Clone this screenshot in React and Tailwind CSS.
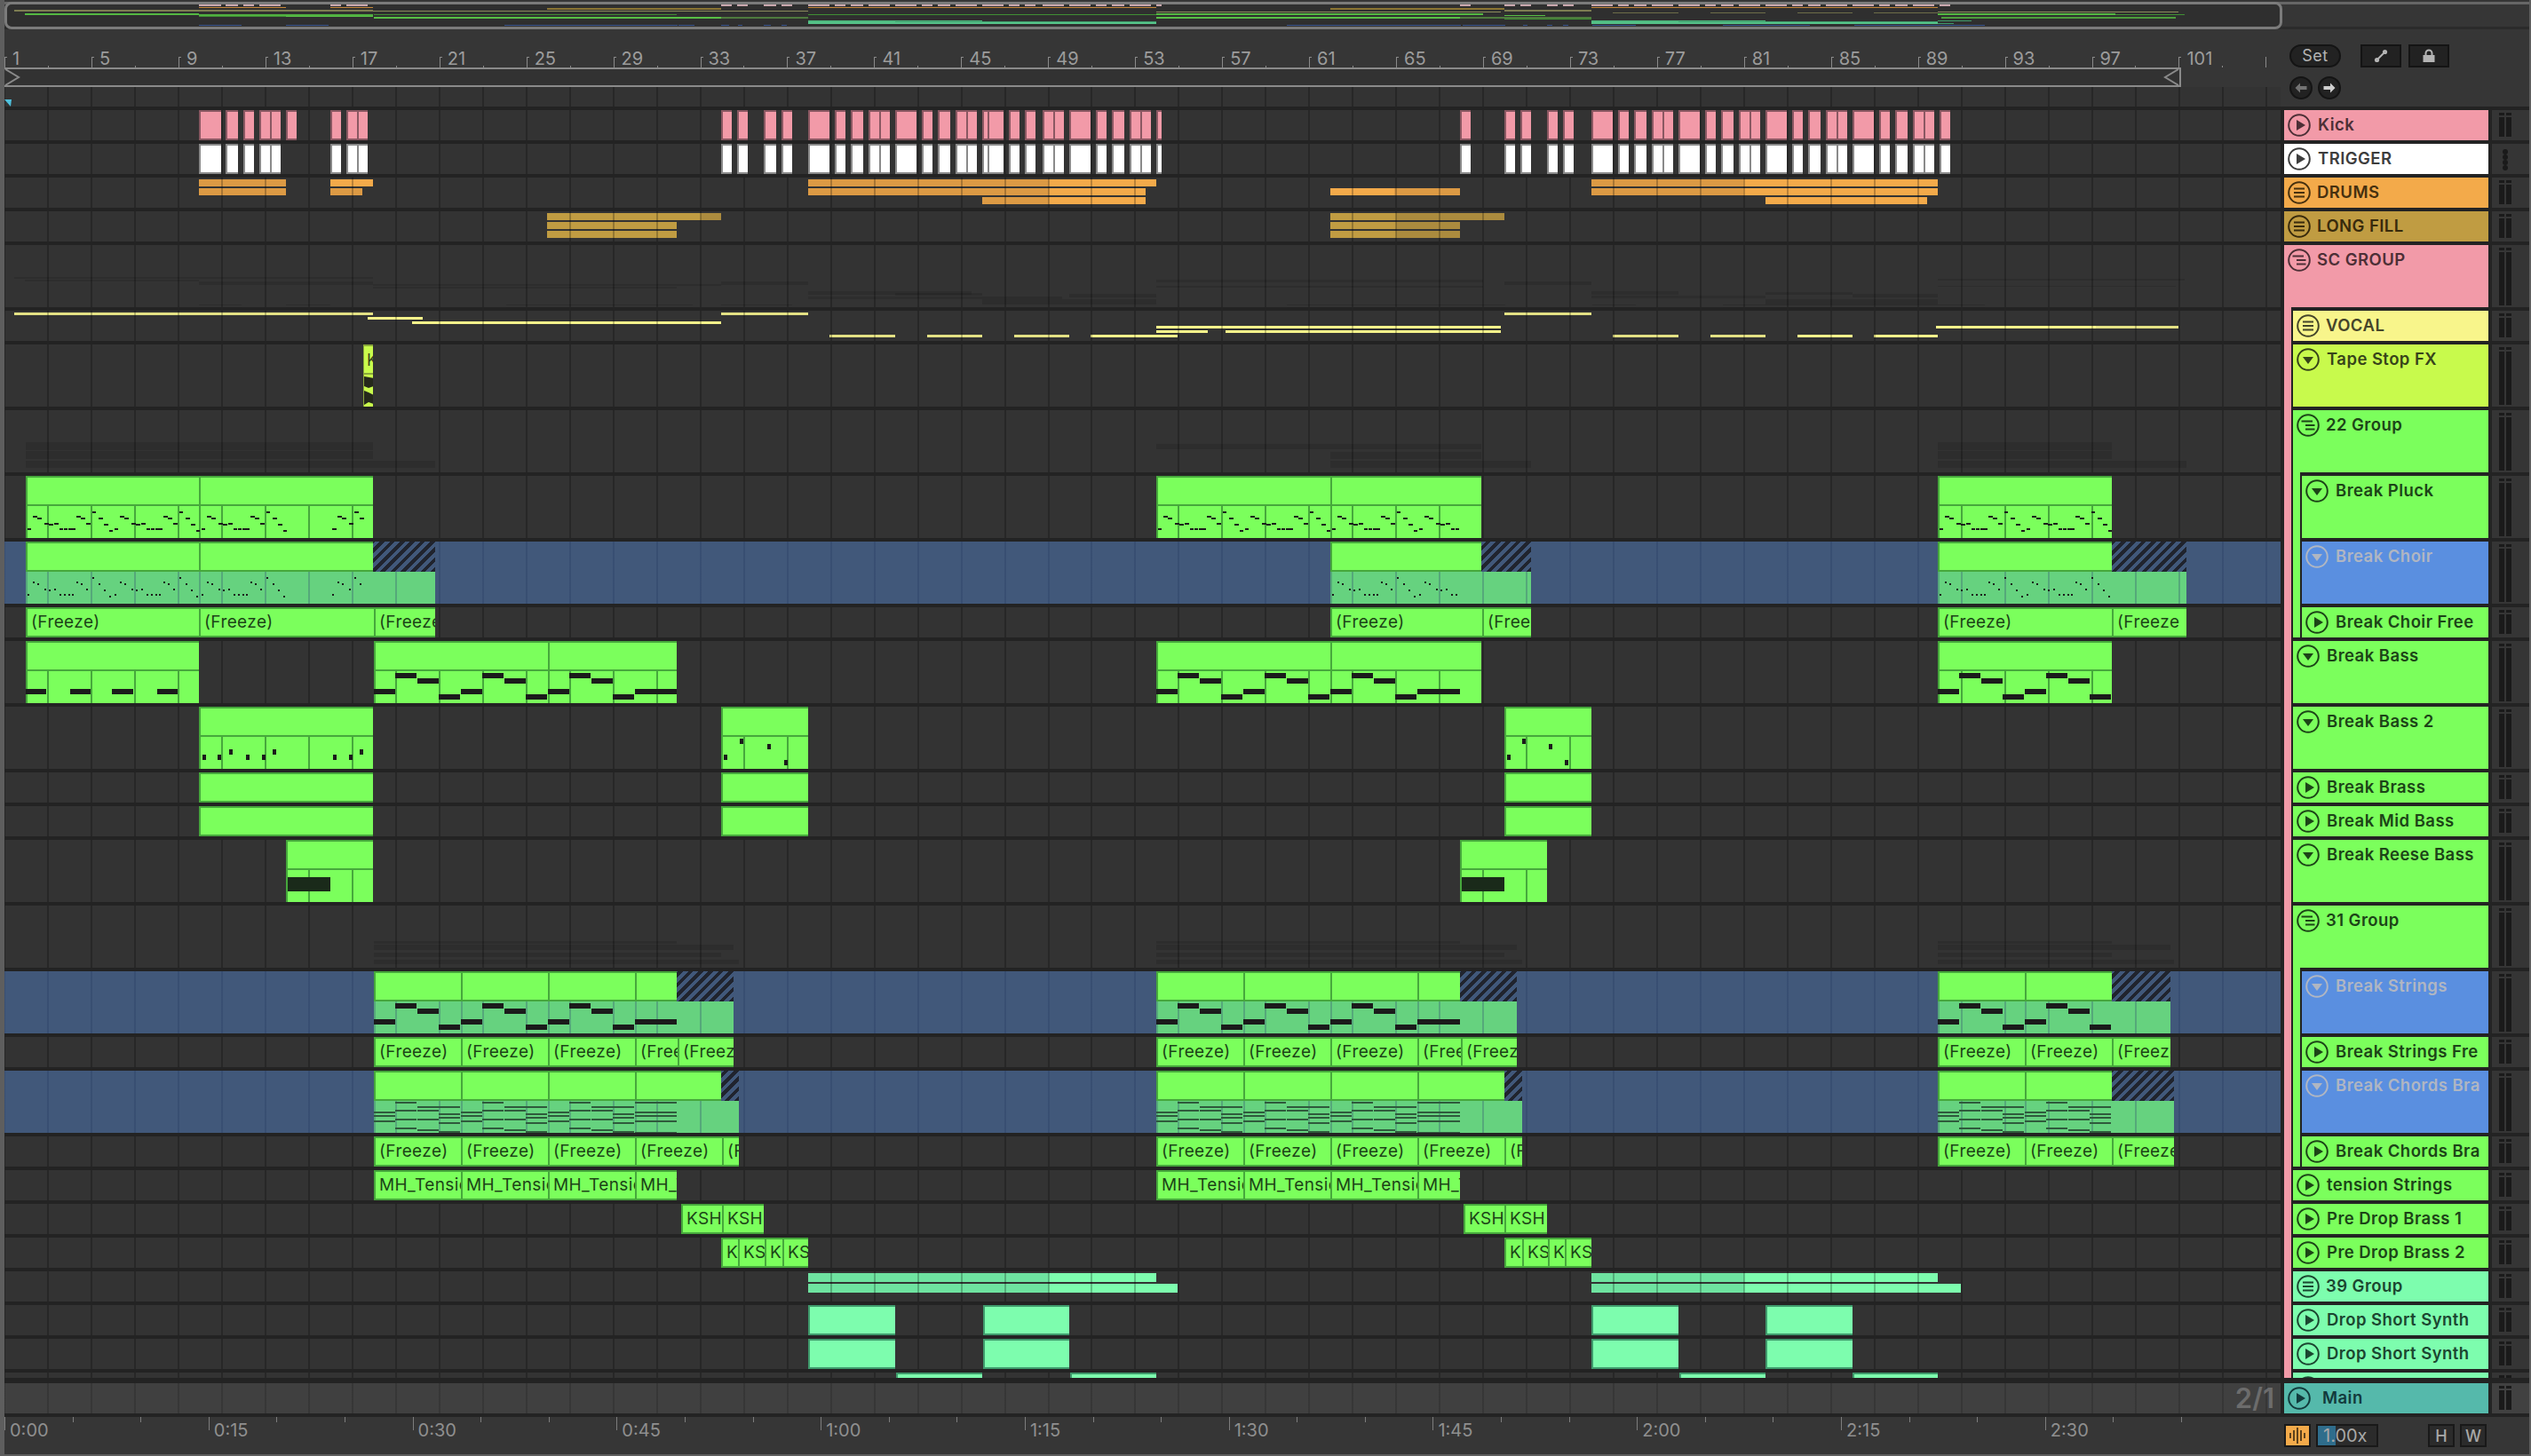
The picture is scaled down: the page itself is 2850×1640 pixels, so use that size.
import React from "react";

// lane coordinates are page px, the arrangement starts at x=5
const BAR_ORANGE = "bg-[#f3aa4a]";
const DIM_ORANGE = "bg-[#dc9a44]";
const BAR_GOLD = "bg-[#c09c42]";
const DIM_GOLD = "bg-[#ab8b3e]";
const BAR_YELLOW = "bg-[#f8f58b]";
const DIM_YELLOW = "bg-[#e3e184]";
const BAR_MINT = "bg-[#7dfdae]";
const DIM_MINT = "bg-[#6ee3a0]";
const GHOST = "bg-black/10";

const hitPattern = (x) => [[x, x + 24], [x + 30, x + 42], [x + 48, x + 62], [x + 68, x + 80], [x + 80, x + 92]];

const TRIGGER_HITS = [
  [224, 249], [254, 268], [274, 286], [292, 304], [304, 316], [372, 384], [390, 402], [402, 414],
  [812, 824], [830, 842], [860, 874], [880, 892],
  ...hitPattern(910), ...hitPattern(1008),
  [1106, 1112], [1112, 1130], [1136, 1148], [1154, 1166], [1174, 1186], [1186, 1198],
  ...hitPattern(1204), [1302, 1308],
  [1644, 1656], [1694, 1706], [1712, 1724], [1742, 1754], [1760, 1772],
  ...hitPattern(1792), ...hitPattern(1890), ...hitPattern(1988), ...hitPattern(2086), [2184, 2196],
];
const KICK_HITS = [...TRIGGER_HITS, [322, 334]];

const PHRASE = [
  [2, 59, 4], [8, 45, 5], [13, 47, 5], [21, 53, 5], [26, 54, 5], [32, 53, 5], [38, 59, 4], [43, 59, 4], [48, 59, 4], [52, 59, 4],
  [57, 45, 5], [62, 47, 5], [68, 53, 5], [75, 40, 4], [82, 47, 5], [88, 54, 5], [94, 61, 4],
];
const phrases = (...starts) => starts.flatMap((s) => PHRASE.map(([x, y, w]) => ({ x: x + s, y, w, h: 2 })));
const dots = (notes) => notes.map((n) => ({ ...n, w: 2 }));

const PLUCK_A = [
  ...phrases(0, 98, 196),
  ...[[345, 59], [351, 45], [356, 47], [364, 53], [370, 40], [376, 47]].map(([x, y]) => ({ x, y, w: 5, h: 2 })),
];
const PLUCK_B = [...phrases(0, 98, 196), ...phrases(294).filter((n) => n.x < 341)];

const BASS_PERIOD = [[0, 54], [24, 36], [49, 42], [73, 60]];
const bass = (periods, long) => {
  const notes = [];
  for (let p = 0; p < periods; p++) {
    BASS_PERIOD.forEach(([x, y]) => notes.push({ x: x + p * 98, y, w: 24, h: 6 }));
  }
  if (long) notes.push({ x: periods * 98, y: 54, w: long, h: 6 });
  return notes;
};

const CHORD_PERIOD = [
  [0, [46, 50, 56]],
  [24, [35, 44, 54, 64]],
  [49, [40, 44, 54, 66]],
  [73, [40, 48, 52, 58, 68]],
];
const chords = (periods, tail) => {
  const notes = [];
  for (let p = 0; p < periods; p++) {
    CHORD_PERIOD.forEach(([x, ys]) => ys.forEach((y) => notes.push({ x: x + p * 98, y, w: 24, h: 2, tone: "bg-[#2f5a3c]" })));
  }
  if (tail) [35, 46, 50, 56, 69].forEach((y) => notes.push({ x: periods * 98, y, w: tail, h: 2, tone: "bg-[#2f5a3c]" }));
  return notes;
};

const stabs = (x0, list) => list.map(([x, y]) => ({ x: x - x0, y, w: 4, h: 6 }));

const OVERVIEW = [
  ...TRIGGER_HITS.map(([a, b]) => [a, b, 5, 2, "bg-[#c9a7ad]"]),
  ...[[224, 322], [372, 420], [910, 1302], [1792, 2182]].map(([a, b]) => [a, b, 8, 1, "bg-[#c5873a]"]),
  [616, 812, 9, 2, "bg-[#8a7433]"], [1498, 1694, 9, 2, "bg-[#8a7433]"],
  [16, 420, 11, 2, "bg-[#7d7d52]"], [420, 812, 12, 1, "bg-[#8a8a5c]"], [812, 910, 12, 1, "bg-[#8a8a5c]"], [1694, 1792, 11, 2, "bg-[#7d7d52]"],
  [1302, 1690, 13, 1, "bg-[#8a8a5c]"], [1816, 1890, 14, 1, "bg-[#6d6d48]"], [1926, 1988, 14, 1, "bg-[#6d6d48]"], [2024, 2086, 14, 1, "bg-[#6d6d48]"], [2110, 2182, 14, 1, "bg-[#6d6d48]"], [2182, 2453, 13, 1, "bg-[#8a8a5c]"],
  [28, 224, 15, 2, "bg-[#54b842]"], [224, 420, 16, 2, "bg-[#50b040]"], [224, 322, 18, 1, "bg-[#3f8f34]"], [322, 420, 18, 1, "bg-[#58c046]"],
  [421, 812, 19, 2, "bg-[#58c046]"], [421, 762, 16, 1, "bg-[#3f8f34]"], [812, 910, 19, 2, "bg-[#4e7a3e]"], [910, 1302, 16, 1, "bg-[#3f8f34]"],
  [1302, 1670, 15, 2, "bg-[#54b842]"], [1302, 1645, 19, 2, "bg-[#58c046]"], [1644, 1792, 19, 2, "bg-[#4e7a3e]"], [1694, 1740, 17, 1, "bg-[#58c046]"], [1694, 1792, 21, 1, "bg-[#3f8f34]"],
  [2182, 2382, 15, 2, "bg-[#54b842]"], [2382, 2460, 16, 1, "bg-[#3f8f34]"], [2186, 2450, 19, 2, "bg-[#4d9d3c]"],
  [910, 1106, 23, 2, "bg-[#4fb880]"], [1008, 1302, 24, 1, "bg-[#3f9a6c]"], [910, 1302, 25, 2, "bg-[#56c48a]"],
  [1792, 1988, 23, 2, "bg-[#4fb880]"], [1890, 2182, 24, 1, "bg-[#3f9a6c]"], [1792, 2182, 25, 2, "bg-[#56c48a]"], [2182, 2220, 23, 1, "bg-[#3f9a6c]"], [2182, 2200, 26, 1, "bg-[#3f9a6c]"],
  ...[[224, 272], [322, 370], [568, 763], [764, 782], [812, 821], [831, 836], [860, 868], [880, 886], [1449, 1645], [1647, 1695], [1715, 1720], [1742, 1748], [1760, 1766], [1793, 1842], [1940, 2038], [2088, 2186], [2186, 2235]].map(([a, b]) => [a, b, 28, 1, "bg-[#3a5690]"]),
];

const SC_GHOSTS = [
  [16, 420, 36, 2], [28, 224, 39, 2], [224, 420, 41, 4], [420, 812, 44, 2], [420, 762, 47, 2], [812, 910, 41, 4],
  [910, 1094, 52, 4], [910, 1196, 58, 3], [1008, 1106, 54, 3], [1106, 1302, 61, 6], [1204, 1302, 55, 4],
  [1302, 1670, 39, 3], [1302, 1670, 46, 2], [1694, 1792, 41, 4], [1792, 1890, 52, 4], [1792, 1988, 57, 3],
  [1988, 2086, 53, 3], [2086, 2182, 55, 4], [1988, 2182, 61, 6], [2182, 2460, 38, 2], [2182, 2450, 46, 1],
  [224, 272, 67, 1], [322, 372, 67, 1], [570, 780, 67, 1], [812, 892, 67, 1], [1449, 1695, 67, 1], [1793, 1842, 67, 1], [1940, 2235, 67, 1],
];
const PLUCK_GHOSTS = [
  [29, 420, 36, 9], [29, 420, 46, 9], [29, 490, 57, 8],
  [1302, 1668, 38, 6], [1498, 1668, 47, 8], [1498, 1724, 57, 8],
  [2182, 2378, 36, 9], [2182, 2378, 46, 9], [2182, 2462, 57, 8],
];
const STRINGS_GHOSTS = [
  [421, 762, 40, 3], [421, 826, 44, 6], [421, 812, 53, 5], [421, 832, 61, 5],
  [1302, 1644, 40, 3], [1302, 1708, 44, 6], [1302, 1694, 53, 5], [1302, 1714, 61, 5],
  [2182, 2378, 40, 3], [2182, 2444, 44, 6], [2182, 2378, 53, 5], [2182, 2448, 61, 5],
];

const Bar = ({ x, end, top, h, className }) => (
  <div className={`absolute ${className}`} style={{ left: x - 5, width: end - x, top, height: h }} />
);

const Ghosts = ({ list }) => list.map(([x, end, top, h], i) => <Bar key={i} x={x} end={end} top={top} h={h} className={GHOST} />);

const Lane = ({ tall, blue, children }) => (
  <div className={`relative w-full shrink-0 overflow-hidden ${tall ? "h-[70px]" : "h-[34px]"} ${blue ? "bg-[#41587a]" : "bg-[#333333]"}`}>
    {children}
    <div
      className={`absolute inset-y-0 -left-px z-[1] w-[2570px] ${
        blue
          ? "bg-[repeating-linear-gradient(90deg,rgba(30,50,90,.25)_0,rgba(30,50,90,.25)_2px,transparent_2px,transparent_48.98px)]"
          : "bg-[repeating-linear-gradient(90deg,rgba(0,0,0,.24)_0,rgba(0,0,0,.24)_2px,transparent_2px,transparent_48.98px)]"
      }`}
    />
  </div>
);

const MidiClip = ({ cuts, end, frozen, notes = [] }) => {
  const x = cuts[0];
  const last = cuts[cuts.length - 1];
  const right = end || last;
  return (
    <div className="absolute inset-y-0 z-[2] overflow-hidden" style={{ left: x - 5, width: right - x }}>
      <div className="flex h-[34px]">
        {cuts.slice(0, -1).map((c, i) => (
          <div key={c} className="h-full shrink-0 border-2 border-r-0 border-[#46a83c] bg-[#7bff5c]" style={{ width: cuts[i + 1] - c }} />
        ))}
        {end && (
          <div className="h-full flex-1 bg-[repeating-linear-gradient(-45deg,#20242e_0,#20242e_4px,#41587a_4px,#41587a_8px)]" />
        )}
      </div>
      <div className={`relative h-[36px] overflow-hidden border-l-2 ${frozen ? "border-[#55a87a] bg-[#66d27f]" : "border-[#46a83c] bg-[#7bff5c]"}`}>
        <div
          className={`absolute inset-y-0 w-[2570px] ${
            frozen
              ? "bg-[repeating-linear-gradient(90deg,#55a87a_0,#55a87a_2px,transparent_2px,transparent_48.98px)]"
              : "bg-[repeating-linear-gradient(90deg,#46a83c_0,#46a83c_2px,transparent_2px,transparent_48.98px)]"
          }`}
          style={{ left: -(x - 5) - 3 }}
        />
        {cuts.slice(1, -1).map((c) => (
          <div key={c} className={`absolute inset-y-0 w-[2px] ${frozen ? "bg-[#55a87a]" : "bg-[#46a83c]"}`} style={{ left: c - x - 2 }} />
        ))}
      </div>
      {notes.map((n, i) => (
        <div key={i} className={`absolute ${n.tone || "bg-[#1b1b1b]"}`} style={{ left: n.x, top: n.y, width: n.w, height: n.h }} />
      ))}
    </div>
  );
};

// a run of touching clips on a short lane: sits at its x, the clips follow each other
const NamedClips = ({ cuts, labels = [], mint }) => (
  <div className="absolute inset-y-0 z-[2] flex" style={{ left: cuts[0] - 5 }}>
    {cuts.slice(0, -1).map((c, i) => (
      <div
        key={c}
        className={`h-full shrink-0 overflow-hidden whitespace-nowrap border-2 border-r-0 pl-1 text-[19px] leading-[30px] tracking-[0.4px] text-[#1c4417] ${
          mint ? "border-[#3f9a6c] bg-[#7dfdae]" : "border-[#46a83c] bg-[#7bff5c]"
        }`}
        style={{ width: cuts[i + 1] - c }}
      >
        {labels[i] || labels[0]}
      </div>
    ))}
  </div>
);

const Hits = ({ list, className }) =>
  list.map(([a, b]) => (
    <div key={a} className={`absolute inset-y-0 z-[2] border-y-2 border-l-2 ${className}`} style={{ left: a - 5, width: b - a }} />
  ));

const TapeClip = () => (
  <div className="absolute inset-y-0 left-[404px] z-[2] w-[11px] overflow-hidden border-l border-[#8aa83a] bg-[#c8fa4c]">
    <div className="h-[2px] bg-[#8aa83a]" />
    <div className="h-[30px] pl-[3px] text-[18px] leading-[32px] text-[#39431a]">K</div>
    <div className="h-[2px] bg-[#8aa83a]" />
    <svg width="11" height="36" viewBox="0 0 11 36" className="block">
      <path d="M0 2 L11 4 L11 13 L5 15 L0 13 Z M0 18 L5 20 L11 23 L11 33 L5 31 L0 34 Z" fill="#25291b" />
    </svg>
  </div>
);

// ruler / time strip
const BAR_NUMBERS = Array.from({ length: 26 }, (_, i) => 1 + i * 4);
const TIMES = ["0:00", "0:15", "0:30", "0:45", "1:00", "1:15", "1:30", "1:45", "2:00", "2:15", "2:30"];

const Ruler = () => (
  <div className="flex h-[87px] w-[2563px] shrink-0 flex-col overflow-hidden">
    <div className="mt-[21px] flex h-[22px] shrink-0">
      {BAR_NUMBERS.map((n) => (
        <React.Fragment key={n}>
          <div className="flex w-[48.98px] shrink-0 items-end">
            <div className="h-[12px] w-[3px] shrink-0 border-l border-t border-[#8a8a8a]" />
            <span className="ml-[6px] self-start text-[20px] leading-[24px] text-[#9c9c9c]">{n}</span>
          </div>
          <div className="flex w-[48.98px] shrink-0 items-end">
            <div className="h-[2px] w-px bg-[#8a8a8a]" />
          </div>
        </React.Fragment>
      ))}
      <div className="flex w-[16px] shrink-0 items-end">
        <div className="h-[12px] w-px bg-[#8a8a8a]" />
      </div>
    </div>
    <div className="flex h-[22px] w-[2451px] shrink-0 justify-between border-y-2 border-r-2 border-[#8a8a8a] bg-[#323232]">
      <svg width="20" height="18" viewBox="0 0 20 18">
        <path d="M1 0 L16 9 L1 18" fill="none" stroke="#8a8a8a" strokeWidth="2" />
      </svg>
      <svg width="20" height="18" viewBox="0 0 20 18">
        <path d="M19 0 L4 9 L19 18" fill="none" stroke="#8a8a8a" strokeWidth="2" />
      </svg>
    </div>
    <div className="relative h-[22px] shrink-0 bg-[#333333]">
      <div className="absolute inset-y-0 -left-px w-[2564px] bg-[repeating-linear-gradient(90deg,rgba(0,0,0,.24)_0,rgba(0,0,0,.24)_2px,transparent_2px,transparent_48.98px)]" />
      <div className="absolute bottom-0 left-0 h-0 w-0 border-l-[7px] border-r-[1px] border-t-[8px] border-l-transparent border-r-transparent border-t-[#4fc0dc]" />
    </div>
  </div>
);

const TimeStrip = () => (
  <div className="flex h-[42px] w-[2563px] shrink-0 overflow-hidden">
    {TIMES.map((t) => (
      <React.Fragment key={t}>
        <div className="flex w-[76.6px] shrink-0">
          <div className="h-[15px] w-px shrink-0 bg-[#7d7d7d]" />
          <span className="ml-[5px] mt-[3px] text-[20px] leading-[24px] text-[#8f8f8f]">{t}</span>
        </div>
        <div className="w-[76.6px] shrink-0">
          <div className="h-[6px] w-px bg-[#7d7d7d]" />
        </div>
        <div className="w-[76.6px] shrink-0">
          <div className="h-[6px] w-px bg-[#7d7d7d]" />
        </div>
      </React.Fragment>
    ))}
  </div>
);

// track headers
const SWATCH = {
  pink: "bg-[#f29aa8] text-[#4d2f36]",
  white: "bg-white text-[#3d3d3d]",
  orange: "bg-[#f3aa4a] text-[#46300f]",
  gold: "bg-[#c09c42] text-[#382a0c]",
  yellow: "bg-[#f8f58b] text-[#45452a]",
  lime: "bg-[#c8fa4c] text-[#37441a]",
  green: "bg-[#7bff5c] text-[#1c4417]",
  blue: "bg-[#5a8fe0] text-[#b0b6c2]",
  mint: "bg-[#7dfdae] text-[#1b4630]",
  main: "bg-[#55b9ab] text-[#123a3c]",
};

const TrackIcon = ({ kind }) => (
  <svg width="26" height="26" viewBox="0 0 26 26" className="shrink-0">
    <circle cx="13" cy="13" r="11.8" fill="none" stroke="currentColor" strokeWidth="2" />
    {kind === "play" && <path d="M10 7 L20 13 L10 19 Z" fill="currentColor" />}
    {kind === "fold" && <path d="M7 10 L19 10 L13 18 Z" fill="currentColor" />}
    {kind === "lines" && <path d="M7 8.5 H19 M7 13 H19 M7 17.5 H19" stroke="currentColor" strokeWidth="2" />}
    {kind === "open" && <path d="M5.5 8.5 H18 M10 13 H20.5 M10 17.5 H20.5" stroke="currentColor" strokeWidth="2" />}
  </svg>
);

const Track = ({ name, kind = "play", swatch = "green", tall }) => (
  <div className={`w-full shrink-0 overflow-hidden ${tall ? "h-[70px]" : "h-[34px]"} ${SWATCH[swatch]}`}>
    <div className={`flex h-[34px] items-center pl-[4px] text-[18.5px] font-semibold tracking-[0.45px] whitespace-nowrap ${kind === "lines" || kind === "open" ? "gap-[7px]" : "gap-[8px]"}`}>
      <TrackIcon kind={kind} />
      <span>{name}</span>
    </div>
  </div>
);

const Nest = ({ strip, children }) => (
  <div className="-mt-1 flex w-full">
    <div className={`w-[8px] shrink-0 ${strip}`} />
    <div className="flex min-w-0 flex-1 flex-col gap-1 pl-[2px] pt-1">{children}</div>
  </div>
);

const METERS = [
  0, "dots", 0, 0, 1, 0, 1, 1, 1, 1, 0, 1, 1, 0, 0, 1, 1, 1, 0, 1, 0, 0, 0, 0, 0, 0, 0, 0,
];

const Meter = ({ tall, dots: dotted, light }) => (
  <div className={`flex w-full shrink-0 gap-[2px] pl-[8px] pt-[3px] ${tall ? "h-[70px]" : "h-[34px]"} ${light ? "bg-[#414141]" : "bg-[#353535]"}`}>
    {dotted ? (
      <div className="ml-[4px] flex flex-col pt-[3px]">
        {[0, 1, 2, 3].map((d) => (
          <div key={d} className="h-[6px] w-[6px] rounded-full bg-[#1a1a1a]" />
        ))}
      </div>
    ) : (
      [0, 1].map((b) => (
        <div key={b} className="flex w-[6px] flex-col gap-[1.5px]">
          <div className="h-[3px] bg-[#1a1a1a]" />
          <div className={`bg-[#1a1a1a] ${tall ? "h-[60px]" : "h-[22px]"}`} />
        </div>
      ))
    )}
  </div>
);

const RoundBtn = ({ children }) => (
  <div className="flex h-[26px] w-[26px] items-center justify-center rounded-full border-2 border-[#141414] bg-[#222222]">{children}</div>
);

const TopControls = () => (
  <div className="flex flex-col gap-[10px] pl-[10px] pt-[17px]">
    <div className="flex items-center gap-[22px]">
      <div className="flex h-[26px] w-[58px] items-center justify-center rounded-full border-2 border-[#141414] bg-[#222222] text-[18px] leading-none tracking-[0.5px] text-[#b4b4b4]">
        Set
      </div>
      <div className="flex gap-[8px]">
        <div className="flex h-[26px] w-[46px] items-center justify-center border-2 border-[#141414] bg-[#222222]">
          <svg width="16" height="16" viewBox="0 0 16 16">
            <path d="M3 13 L13 3" stroke="#b4b4b4" strokeWidth="2" />
            <circle cx="3.5" cy="12.5" r="2.6" fill="#b4b4b4" />
            <circle cx="12.5" cy="3.5" r="2.6" fill="#b4b4b4" />
          </svg>
        </div>
        <div className="flex h-[26px] w-[46px] items-center justify-center border-2 border-[#141414] bg-[#222222]">
          <svg width="16" height="16" viewBox="0 0 16 16">
            <path d="M4.5 7 V5 a3.5 3.5 0 0 1 7 0 V7" fill="none" stroke="#b4b4b4" strokeWidth="2" />
            <rect x="1.5" y="7" width="13" height="8" fill="#b4b4b4" />
          </svg>
        </div>
      </div>
    </div>
    <div className="flex gap-[6px]">
      <RoundBtn>
        <svg width="14" height="12" viewBox="0 0 14 12">
          <path d="M0.5 6 L6 0.5 V4 H13.5 V8 H6 V11.5 Z" fill="#737373" />
        </svg>
      </RoundBtn>
      <RoundBtn>
        <svg width="14" height="12" viewBox="0 0 14 12">
          <path d="M13.5 6 L8 0.5 V4 H0.5 V8 H8 V11.5 Z" fill="#cfcfcf" />
        </svg>
      </RoundBtn>
    </div>
  </div>
);

const BottomControls = () => (
  <div className="flex items-start pl-[4px] pt-[8px]">
    <div className="flex h-[26px] w-[30px] items-center justify-center border-2 border-[#191919] bg-[#f3aa4a]">
      <svg width="20" height="18" viewBox="0 0 20 18">
        <path d="M2 6 V12 M6 3 V15 M10 0 V18 M14 3 V15 M18 6 V12" stroke="#3a2a12" strokeWidth="1.6" />
      </svg>
    </div>
    <div className="relative ml-[6px] h-[26px] w-[70px] border-2 border-[#191919] bg-[#2b2b2b]">
      <div className="absolute inset-y-0 left-0 w-[20px] bg-[#2f6d8c]" />
      <div className="relative pl-[6px] text-[20px] leading-[22px] text-[#a8a8a8]">1.00x</div>
    </div>
    <div className="ml-[56px] flex gap-[6px]">
      {["H", "W"].map((l) => (
        <div key={l} className="flex h-[26px] w-[30px] items-center justify-center border-2 border-[#191919] bg-[#2b2b2b] text-[18px] font-medium text-[#a8a8a8]">
          {l}
        </div>
      ))}
    </div>
  </div>
);

const Overview = () => (
  <div className="relative h-[33px] w-full shrink-0">
    <div className="absolute inset-x-0 top-[2px] h-[3px] bg-[#666666]" />
    <div className="absolute inset-x-0 top-[30px] h-[3px] bg-[#2b2b2b]" />
    <div className="absolute left-0 top-[2px] h-[31px] w-[2565px] rounded-[8px] border-[3px] border-[#7b7b7b] bg-[#2f2f2f]" />
    {OVERVIEW.map(([x, end, top, h, color], i) => (
      <Bar key={i} x={x} end={end} top={top} h={h} className={color} />
    ))}
  </div>
);

const Lanes = () => (
  <div className="flex w-[2563px] shrink-0 flex-col gap-1">
    <Lane><Hits list={KICK_HITS} className="border-[#8a5862] bg-[#f29aa8]" /></Lane>
    <Lane><Hits list={TRIGGER_HITS} className="border-[#8a8a8a] bg-white" /></Lane>
    <Lane>
      <Bar x={224} end={322} top={2} h={8} className={DIM_ORANGE} />
      <Bar x={224} end={322} top={12} h={8} className={DIM_ORANGE} />
      <Bar x={372} end={420} top={2} h={8} className={BAR_ORANGE} />
      <Bar x={372} end={408} top={12} h={8} className={DIM_ORANGE} />
      <Bar x={910} end={1181} top={2} h={8} className={DIM_ORANGE} />
      <Bar x={1181} end={1302} top={2} h={8} className={BAR_ORANGE} />
      <Bar x={910} end={1181} top={12} h={8} className={DIM_ORANGE} />
      <Bar x={1181} end={1290} top={12} h={8} className={BAR_ORANGE} />
      <Bar x={1106} end={1181} top={22} h={8} className={DIM_ORANGE} />
      <Bar x={1181} end={1290} top={22} h={8} className={BAR_ORANGE} />
      <Bar x={1498} end={1570} top={12} h={8} className={BAR_ORANGE} />
      <Bar x={1570} end={1644} top={12} h={8} className={DIM_ORANGE} />
      <Bar x={1792} end={1963} top={2} h={8} className={DIM_ORANGE} />
      <Bar x={1963} end={2182} top={2} h={8} className={BAR_ORANGE} />
      <Bar x={1792} end={1963} top={12} h={8} className={DIM_ORANGE} />
      <Bar x={1963} end={2182} top={12} h={8} className={BAR_ORANGE} />
      <Bar x={1988} end={2170} top={22} h={8} className={BAR_ORANGE} />
    </Lane>
    <Lane>
      <Bar x={616} end={789} top={2} h={8} className={BAR_GOLD} />
      <Bar x={789} end={812} top={2} h={8} className={DIM_GOLD} />
      <Bar x={616} end={762} top={12} h={8} className={BAR_GOLD} />
      <Bar x={616} end={762} top={22} h={8} className={BAR_GOLD} />
      <Bar x={1498} end={1572} top={2} h={8} className={BAR_GOLD} />
      <Bar x={1572} end={1694} top={2} h={8} className={DIM_GOLD} />
      <Bar x={1498} end={1572} top={12} h={8} className={BAR_GOLD} />
      <Bar x={1572} end={1644} top={12} h={8} className={DIM_GOLD} />
      <Bar x={1498} end={1572} top={22} h={8} className={BAR_GOLD} />
      <Bar x={1572} end={1644} top={22} h={8} className={DIM_GOLD} />
    </Lane>
    <Lane tall><Ghosts list={SC_GHOSTS} /></Lane>
    <Lane>
      <Bar x={16} end={420} top={2} h={3} className={DIM_YELLOW} />
      <Bar x={414} end={476} top={7} h={3} className={BAR_YELLOW} />
      <Bar x={464} end={812} top={12} h={3} className={BAR_YELLOW} />
      <Bar x={812} end={910} top={2} h={3} className={DIM_YELLOW} />
      <Bar x={934} end={1008} top={27} h={3} className={DIM_YELLOW} />
      <Bar x={1044} end={1106} top={27} h={3} className={DIM_YELLOW} />
      <Bar x={1142} end={1204} top={27} h={3} className={DIM_YELLOW} />
      <Bar x={1228} end={1326} top={27} h={3} className={BAR_YELLOW} />
      <Bar x={1302} end={1690} top={17} h={3} className={BAR_YELLOW} />
      <Bar x={1302} end={1360} top={22} h={3} className={BAR_YELLOW} />
      <Bar x={1380} end={1690} top={22} h={3} className={BAR_YELLOW} />
      <Bar x={1694} end={1792} top={2} h={3} className={DIM_YELLOW} />
      <Bar x={1816} end={1890} top={27} h={3} className={DIM_YELLOW} />
      <Bar x={1926} end={1988} top={27} h={3} className={DIM_YELLOW} />
      <Bar x={2024} end={2086} top={27} h={3} className={BAR_YELLOW} />
      <Bar x={2110} end={2182} top={27} h={3} className={BAR_YELLOW} />
      <Bar x={2180} end={2360} top={17} h={3} className={BAR_YELLOW} />
      <Bar x={2360} end={2453} top={17} h={3} className={DIM_YELLOW} />
    </Lane>
    <Lane tall><TapeClip /></Lane>
    <Lane tall><Ghosts list={PLUCK_GHOSTS} /></Lane>
    <Lane tall>
      <MidiClip cuts={[29, 224, 420]} notes={PLUCK_A} />
      <MidiClip cuts={[1302, 1498, 1668]} notes={PLUCK_B} />
      <MidiClip cuts={[2182, 2378]} notes={phrases(0, 98)} />
    </Lane>
    <Lane tall blue>
      <MidiClip cuts={[29, 224, 420]} end={490} frozen notes={dots(PLUCK_A)} />
      <MidiClip cuts={[1498, 1668]} end={1724} frozen notes={dots(phrases(0).concat(phrases(98).filter((n) => n.x < 145)))} />
      <MidiClip cuts={[2182, 2378]} end={2462} frozen notes={dots(phrases(0, 98))} />
    </Lane>
    <Lane>
      <NamedClips cuts={[29, 224, 421, 490]} labels={["(Freeze)"]} />
      <NamedClips cuts={[1498, 1669, 1724]} labels={["(Freeze)"]} />
      <NamedClips cuts={[2182, 2378, 2462]} labels={["(Freeze)", "(Freeze"]} />
    </Lane>
    <Lane tall>
      <MidiClip
        cuts={[29, 224]}
        notes={[[0, 23], [50, 23], [97, 24], [148, 23]].map(([x, w]) => ({ x, y: 54, w, h: 6 }))}
      />
      <MidiClip cuts={[421, 617, 762]} notes={bass(3, 47)} />
      <MidiClip cuts={[1302, 1498, 1668]} notes={bass(3, 48)} />
      <MidiClip cuts={[2182, 2378]} notes={bass(2)} />
    </Lane>
    <Lane tall>
      <MidiClip
        cuts={[224, 420]}
        notes={stabs(224, [[228, 54], [245, 54], [258, 48], [277, 54], [295, 54], [307, 48], [375, 54], [393, 54], [405, 48]])}
      />
      <MidiClip cuts={[812, 910]} notes={stabs(812, [[815, 54], [833, 36], [864, 42], [883, 60]])} />
      <MidiClip cuts={[1694, 1792]} notes={stabs(1694, [[1697, 54], [1714, 36], [1744, 42], [1762, 60]])} />
    </Lane>
    <Lane>
      <NamedClips cuts={[224, 420]} />
      <NamedClips cuts={[812, 910]} />
      <NamedClips cuts={[1694, 1792]} />
    </Lane>
    <Lane>
      <NamedClips cuts={[224, 420]} />
      <NamedClips cuts={[812, 910]} />
      <NamedClips cuts={[1694, 1792]} />
    </Lane>
    <Lane tall>
      <MidiClip cuts={[322, 420]} notes={[{ x: 2, y: 42, w: 48, h: 16, tone: "bg-[#1a2a1a]" }]} />
      <MidiClip cuts={[1644, 1742]} notes={[{ x: 2, y: 42, w: 48, h: 16, tone: "bg-[#1a2a1a]" }]} />
    </Lane>
    <Lane tall><Ghosts list={STRINGS_GHOSTS} /></Lane>
    <Lane tall blue>
      <MidiClip cuts={[421, 519, 617, 715, 762]} end={826} frozen notes={bass(3, 47)} />
      <MidiClip cuts={[1302, 1400, 1498, 1596, 1644]} end={1708} frozen notes={bass(3, 48)} />
      <MidiClip cuts={[2182, 2280, 2378]} end={2444} frozen notes={bass(2)} />
    </Lane>
    <Lane>
      <NamedClips cuts={[421, 519, 617, 715, 763, 826]} labels={["(Freeze)"]} />
      <NamedClips cuts={[1302, 1400, 1498, 1596, 1645, 1708]} labels={["(Freeze)"]} />
      <NamedClips cuts={[2182, 2280, 2378, 2444]} labels={["(Freeze)"]} />
    </Lane>
    <Lane tall blue>
      <MidiClip cuts={[421, 519, 617, 715, 812]} end={832} frozen notes={chords(3, 47)} />
      <MidiClip cuts={[1302, 1400, 1498, 1596, 1694]} end={1714} frozen notes={chords(3, 48)} />
      <MidiClip cuts={[2182, 2280, 2378]} end={2448} frozen notes={chords(2)} />
    </Lane>
    <Lane>
      <NamedClips cuts={[421, 519, 617, 715, 813, 832]} labels={["(Freeze)"]} />
      <NamedClips cuts={[1302, 1400, 1498, 1596, 1694, 1714]} labels={["(Freeze)"]} />
      <NamedClips cuts={[2182, 2280, 2378, 2448]} labels={["(Freeze)"]} />
    </Lane>
    <Lane>
      <NamedClips cuts={[421, 519, 617, 715, 762]} labels={["MH_Tension"]} />
      <NamedClips cuts={[1302, 1400, 1498, 1596, 1644]} labels={["MH_Tension"]} />
    </Lane>
    <Lane>
      <NamedClips cuts={[767, 813, 860]} labels={["KSH"]} />
      <NamedClips cuts={[1648, 1694, 1742]} labels={["KSH"]} />
    </Lane>
    <Lane>
      <NamedClips cuts={[812, 831, 861, 881, 910]} labels={["K", "KS", "K", "KS"]} />
      <NamedClips cuts={[1694, 1714, 1743, 1762, 1792]} labels={["K", "KS", "K", "KS"]} />
    </Lane>
    <Lane>
      <Bar x={910} end={1181} top={2} h={10} className={DIM_MINT} />
      <Bar x={1181} end={1302} top={2} h={10} className={BAR_MINT} />
      <Bar x={910} end={1181} top={14} h={10} className={DIM_MINT} />
      <Bar x={1181} end={1326} top={14} h={10} className={BAR_MINT} />
      <Bar x={1792} end={1964} top={2} h={10} className={DIM_MINT} />
      <Bar x={1964} end={2182} top={2} h={10} className={BAR_MINT} />
      <Bar x={1792} end={1964} top={14} h={10} className={DIM_MINT} />
      <Bar x={1964} end={2208} top={14} h={10} className={BAR_MINT} />
    </Lane>
    <Lane>
      <NamedClips cuts={[910, 1008]} mint />
      <NamedClips cuts={[1107, 1204]} mint />
      <NamedClips cuts={[1792, 1890]} mint />
      <NamedClips cuts={[1988, 2086]} mint />
    </Lane>
    <Lane>
      <NamedClips cuts={[910, 1008]} mint />
      <NamedClips cuts={[1107, 1204]} mint />
      <NamedClips cuts={[1792, 1890]} mint />
      <NamedClips cuts={[1988, 2086]} mint />
    </Lane>
    <Lane>
      <NamedClips cuts={[1009, 1106]} mint />
      <NamedClips cuts={[1205, 1302]} mint />
      <NamedClips cuts={[1891, 1988]} mint />
      <NamedClips cuts={[2086, 2182]} mint />
    </Lane>
  </div>
);

const Headers = () => (
  <div className="flex w-[230px] shrink-0 flex-col gap-1">
    <Track name="Kick" swatch="pink" />
    <Track name="TRIGGER" swatch="white" />
    <Track name="DRUMS" kind="lines" swatch="orange" />
    <Track name="LONG FILL" kind="lines" swatch="gold" />
    <Track name="SC GROUP" kind="open" swatch="pink" tall />
    <Nest strip="bg-[#f29aa8]">
      <Track name="VOCAL" kind="lines" swatch="yellow" />
      <Track name="Tape Stop FX" kind="fold" swatch="lime" tall />
      <Track name="22 Group" kind="open" tall />
      <Nest strip="bg-[#7bff5c]">
        <Track name="Break Pluck" kind="fold" tall />
        <Track name="Break Choir" kind="fold" swatch="blue" tall />
        <Track name="Break Choir Free" />
      </Nest>
      <Track name="Break Bass" kind="fold" tall />
      <Track name="Break Bass 2" kind="fold" tall />
      <Track name="Break Brass" />
      <Track name="Break Mid Bass" />
      <Track name="Break Reese Bass" kind="fold" tall />
      <Track name="31 Group" kind="open" tall />
      <Nest strip="bg-[#7bff5c]">
        <Track name="Break Strings" kind="fold" swatch="blue" tall />
        <Track name="Break Strings Fre" />
        <Track name="Break Chords Bra" kind="fold" swatch="blue" tall />
        <Track name="Break Chords Bra" />
      </Nest>
      <Track name="tension Strings" />
      <Track name="Pre Drop Brass 1" />
      <Track name="Pre Drop Brass 2" />
      <Track name="39 Group" kind="lines" swatch="mint" />
      <Track name="Drop Short Synth" swatch="mint" />
      <Track name="Drop Short Synth" swatch="mint" />
      <Track name="Drop Short Synth" swatch="mint" />
    </Nest>
  </div>
);

export default function App() {
  return (
    <div className="flex h-[1640px] w-[2850px] flex-col overflow-hidden border-b-2 border-l-[5px] border-r-2 border-[#5e5e5e] bg-[#363636] [font-family:Inter,sans-serif]">
      <Overview />
      <div className="flex h-[87px] shrink-0">
        <Ruler />
        <TopControls />
      </div>
      <div className="flex h-[1432px] shrink-0 gap-1 overflow-hidden bg-[#232323] pt-1">
        <Lanes />
        <Headers />
        <div className="flex min-w-0 flex-1 flex-col gap-1">
          {METERS.map((m, i) => (
            <Meter key={i} tall={m === 1} dots={m === "dots"} />
          ))}
        </div>
      </div>
      <div className="flex h-[44px] shrink-0 gap-1 bg-[#232323] pb-1 pt-[6px]">
        <div className="relative flex h-[34px] w-[2563px] shrink-0 justify-end overflow-hidden bg-[#404040] pr-[7px]">
          <div className="absolute inset-y-0 -left-px w-[2570px] bg-[repeating-linear-gradient(90deg,rgba(0,0,0,.15)_0,rgba(0,0,0,.15)_2px,transparent_2px,transparent_48.98px)]" />
          <span className="relative text-[31px] font-semibold leading-[34px] text-[#6c6c6c]">2/1</span>
        </div>
        <div className={`flex h-[34px] w-[230px] shrink-0 items-center gap-[13px] pl-[4px] text-[18.5px] font-semibold tracking-[0.45px] ${SWATCH.main}`}>
          <TrackIcon kind="play" />
          <span>Main</span>
        </div>
        <div className="min-w-0 flex-1">
          <Meter light />
        </div>
      </div>
      <div className="flex min-h-0 flex-1">
        <TimeStrip />
        <BottomControls />
      </div>
    </div>
  );
}
